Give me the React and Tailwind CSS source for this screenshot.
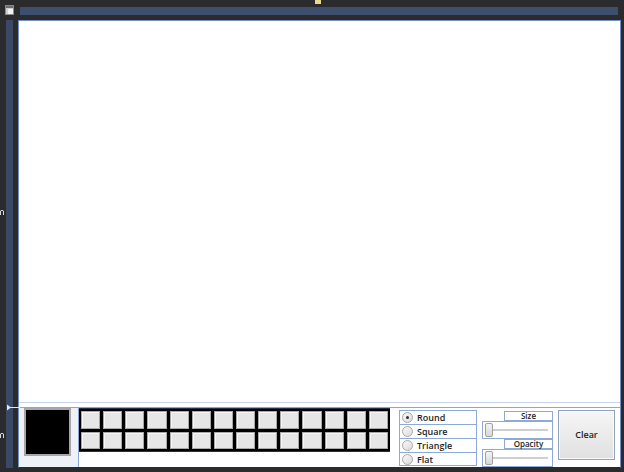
import React from "react";

const Cell = () => (
  <div className="bg-[#e6e6e6] border border-[#a8a8a8] shadow-[inset_1px_1px_0_#f6f6f6]" />
);

const Radio = ({ label, checked, last }) => (
  <div
    className={
      "h-[14px] flex items-center border border-[#8ea8d8] bg-white pl-[2px] " +
      (last ? "" : "border-b-0")
    }
  >
    <div className="w-[11px] h-[11px] rounded-full border border-[#a9a9a9] bg-gradient-to-br from-[#f8f8f8] to-[#dcdcdc] flex items-center justify-center">
      {checked && <div className="w-[3px] h-[3px] rounded-full bg-[#333]" />}
    </div>
    <span className="ml-[4px] text-[9px] leading-none text-[#1e1e1e] font-semibold font-['Open_Sans',sans-serif]">
      {label}
    </span>
  </div>
);

const Slider = ({ label }) => (
  <div className="flex flex-col items-end">
    <div className="w-[49px] h-[10px] border border-[#8ea8d8] bg-white flex items-center justify-center text-[8px] leading-none font-semibold text-[#1e1e1e] font-['Open_Sans',sans-serif]">
      {label}
    </div>
    <div className="w-[71px] h-[18px] border border-[#8ea8d8] bg-white flex items-center pl-[2px] pr-[4px]">
      <div className="w-[8px] h-[14px] rounded-[2px] border border-[#a0a0a0] bg-gradient-to-b from-[#f4f4f4] to-[#d8d8d8]" />
      <div className="flex-1 h-[2px] bg-[#cfcfcf]" />
    </div>
  </div>
);

export default function App() {
  return (
    <div className="w-[624px] h-[472px] bg-[#2b2b2d] relative overflow-hidden font-['Liberation_Sans',sans-serif]">
      {/* yellow marker */}
      <div className="absolute left-[315px] top-0 w-[6px] h-[4px] bg-[#e8d98e]" />
      {/* left edge glyphs */}
      <svg className="absolute left-0 top-[209px]" width="4" height="6" viewBox="0 0 4 6">
        <path d="M0.5 6 V2 Q2 0.5 3.5 2 V6" stroke="#d8d8d8" strokeWidth="1" fill="none" />
      </svg>
      <svg className="absolute left-0 top-[432px]" width="4" height="6" viewBox="0 0 4 6">
        <path d="M0.5 6 V2 Q2 0.5 3.5 2 V6" stroke="#d8d8d8" strokeWidth="1" fill="none" />
      </svg>
      {/* arrow marker */}
      <svg className="absolute left-[6px] top-[404px]" width="14" height="7" viewBox="0 0 14 7">
        <path d="M1 3.5 H14" stroke="#dfe8f8" strokeWidth="1" />
        <path d="M1 0.5 L5 3.5 L1 6.5 Z" fill="#dfe8f8" />
      </svg>

      <div className="flex h-[20px]">
        <svg className="ml-[5px] mt-[5px]" width="9" height="10" viewBox="0 0 9 10">
          <rect x="0.5" y="0.5" width="8" height="9" fill="#cfcfcf" stroke="#8a8a8a" />
          <rect x="1" y="1" width="7" height="2" fill="#6d6d6d" />
          <rect x="3" y="4" width="5" height="5" fill="#f2f2f2" />
        </svg>
        <div className="ml-[6px] mt-[7px] h-[8px] w-[598px] bg-[#3e4f6e]" />
      </div>

      <div className="flex h-[448px]">
        <div className="ml-[6px] w-[7px] h-[448px] bg-[#3a4966]" />
        <div className="ml-[5px] w-[603px] h-[448px] border border-[#7391c8] border-b-[#2b2b2d] bg-white flex flex-col">
          <div className="h-[381px] bg-white" />
          <div className="h-[1px] bg-[#c6d3ea]" />
          <div className="h-[4px] bg-white" />
          <div className="h-[1px] bg-[#8ca6d6]" />
          <div className="flex h-[59px]">
            <div className="w-[60px] bg-[#eef1f7] border-r border-[#8ca6d6] pl-[5px]">
              <div className="w-[47px] h-[48px] bg-black border-2 border-[#a6a6a6]" />
            </div>
            <div className="flex flex-col">
              <div className="w-[311px] h-[44px] bg-black border-y border-[#25324d] grid grid-cols-14 grid-rows-2 gap-[3px] p-[2px]">
                {Array.from({ length: 28 }).map((_, i) => (
                  <Cell key={i} />
                ))}
              </div>
            </div>
            <div className="ml-[9px] mt-[2px] w-[78px] flex flex-col">
              <Radio label="Round" checked />
              <Radio label="Square" />
              <Radio label="Triangle" />
              <Radio label="Flat" last />
            </div>
            <div className="ml-[5px] mt-[3px] flex flex-col">
              <Slider label="Size" />
              <Slider label="Opacity" />
            </div>
            <div className="ml-[5px] mt-[2px] w-[57px] h-[50px] border border-[#8fa1bf] bg-gradient-to-b from-[#f6f6f6] to-[#e0e0e0] shadow-[inset_0_0_0_1px_#fbfbfb] flex items-center justify-center text-[9px] font-semibold text-[#1e1e1e] font-['Open_Sans',sans-serif]">
              Clear
            </div>
          </div>
        </div>
      </div>
    </div>
  );
}
